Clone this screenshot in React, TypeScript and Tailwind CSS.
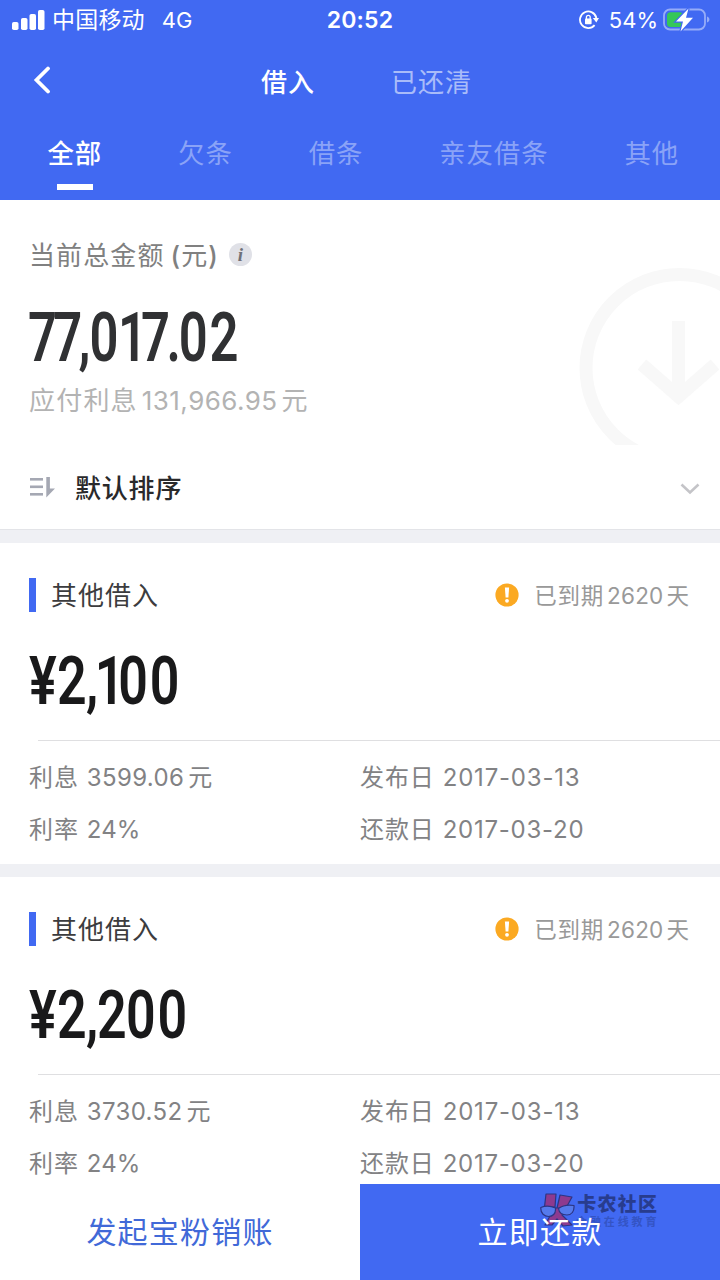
import clsx from "clsx";

const tabs = ["全部", "欠条", "借条", "亲友借条", "其他"];

const loans = [
  { title: "其他借入", overdue: "2620", amount: "¥2,100", interest: "3599.06", rate: "24%", issued: "2017-03-13", due: "2017-03-20" },
  { title: "其他借入", overdue: "2620", amount: "¥2,200", interest: "3730.52", rate: "24%", issued: "2017-03-13", due: "2017-03-20" },
];

// narrow DIN-like spacing for the big amounts
const glyphSpacing: Record<string, string> = {
  "¥": "tracking-[0.500px]",
  "0": "tracking-[2.500px]",
  "1": "-ml-[3px] tracking-[-8px]",
  "2": "tracking-[-1px]",
  "7": "tracking-[-5px]",
  ".": "tracking-[-3px]",
  ",": "tracking-[-1.500px]",
};

function Amount({ value, className }: { value: string; className: string }) {
  return (
    <div
      className={clsx(
        "h-[72px] w-fit origin-left font-[Roboto,sans-serif] leading-[72px] font-semibold whitespace-nowrap [font-kerning:none]",
        className,
      )}
    >
      {value.split("").map((char, i) => (
        <span key={i} className={glyphSpacing[char]}>
          {char}
        </span>
      ))}
    </div>
  );
}

function StatusBar() {
  return (
    <div className="grid h-10 grid-cols-[1fr_auto_1fr] items-center text-[22px] leading-10">
      <div className="flex items-center pl-3">
        <svg width="33" height="20" viewBox="0 0 33 20" fill="currentColor">
          <rect x="0" y="12" width="6.5" height="8" rx="1.8" />
          <rect x="9" y="8" width="6.5" height="12" rx="1.8" />
          <rect x="17.5" y="4" width="6.5" height="16" rx="1.8" />
          <rect x="26" y="0" width="6.5" height="20" rx="1.8" />
        </svg>
        <span className="ml-[7px] text-[23px] tracking-[0.2px]">中国移动</span>
        <span className="ml-[17px]">4G</span>
      </div>
      <div className="text-[23px] font-semibold tracking-[0.2px]">20:52</div>
      <div className="flex items-center justify-end pr-[10px]">
        <svg width="20" height="20" viewBox="0 0 20 20" fill="none" stroke="currentColor" strokeWidth="1.8">
          <path d="M15.6 15.200A8.300 8.300 0 1 1 17.400 8" />
          <path d="M13.800 8H20l-2.700 4.400z" fill="currentColor" stroke="none" />
          <rect x="6" y="8.600" width="6.600" height="5.600" rx="0.8" fill="currentColor" stroke="none" />
          <path d="M7.400 9V7.300a1.900 1.900 0 0 1 3.800 0V9" strokeWidth="1.300" />
        </svg>
        <span className="ml-[10px]">54%</span>
        <svg className="ml-[5px]" width="47" height="24" viewBox="0 0 47 24">
          <rect x="1" y="1.500" width="41" height="20" rx="6" fill="none" stroke="#fff" strokeOpacity="0.45" strokeWidth="1.8" />
          <path d="M44 8.500v6c1.600-.6 2.400-1.700 2.400-3s-.8-2.400-2.400-3z" fill="#fff" fillOpacity="0.45" />
          <rect x="4" y="4.300" width="16" height="14.600" rx="3.500" fill="#35c759" />
          <path d="M25.500.5 13 13.500h7L17.500 23.500 30 9.800h-7z" fill="#fff" stroke="#4169f2" strokeWidth="2.400" paintOrder="stroke" />
        </svg>
      </div>
    </div>
  );
}

function Header() {
  return (
    <header className="h-[200px] shrink-0 bg-[#4169f2] text-white">
      <StatusBar />
      <div className="flex h-[82px] items-center pl-[33px] text-[26px] leading-[38px] tracking-[1px]">
        <svg className="-mt-0.5" width="18" height="28" viewBox="0 0 18 28" fill="none" stroke="currentColor" strokeWidth="3.800">
          <path d="M15 2.500 3.500 14 15 25.500" strokeLinecap="round" />
        </svg>
        <span className="ml-[210px] pt-[3px] font-medium">借入</span>
        <span className="ml-[76px] pt-[3px] text-[#a9bcf9]">已还清</span>
      </div>
      <nav className="flex gap-[76px] pl-[47.500px] text-[26.400px] leading-[38px] tracking-[0.900px]">
        {tabs.map((tab, i) => (
          <div key={tab} className={clsx("flex shrink-0 flex-col items-center pt-[12px]", i === 0 ? "font-medium" : "text-[#8aa3f7]")}>
            {tab}
            {i === 0 && <span className="mt-[12px] h-1.5 w-9 bg-white" />}
          </div>
        ))}
      </nav>
    </header>
  );
}

function Summary() {
  return (
    <section className="relative h-[246px] shrink-0 overflow-hidden pl-[29px]">
      <svg className="absolute top-[68px] right-0" width="141" height="177" viewBox="0 0 141 177" fill="none" stroke="#f8f8f8" strokeWidth="13">
        <circle cx="100.500" cy="100" r="93.500" />
        <path d="M99.500 53v72M63 96.500l36.500 32 36.500-32" strokeLinejoin="miter" />
      </svg>
      <div className="flex items-center pt-[37px] text-[26px] leading-[38px] tracking-[1.100px] text-[#808080]">
        <span>当前总金额</span>
        <span className="ml-[6px] font-medium">(</span>
        <span>元</span>
        <span className="font-medium">)</span>
        <span className="-mt-[3px] ml-[10px] flex size-[23px] items-center justify-center rounded-full bg-[#e0e1e7] pb-px pl-px font-['Liberation_Serif',serif] text-[19px] leading-none font-bold text-[#6f7077] italic">
          i
        </span>
      </div>
      <Amount value="77,017.02" className="-ml-[1px] mt-[27px] scale-x-[0.735] text-[69px] text-[#303133]" />
      <div className="mt-[8px] flex text-[26px] leading-[38px] tracking-[1.200px] text-[#b3b3b3]">
        <span>应付利息</span>
        <span className="ml-[4px] tracking-[0.450px]">131,966.95</span>
        <span className="ml-[4px]">元</span>
      </div>
    </section>
  );
}

function SortBar() {
  return (
    <div className="flex h-[84px] shrink-0 items-center border-b border-[#e3e4e8] pr-5 pl-[29px]">
      <svg width="27" height="22" viewBox="0 0 27 22" fill="#a5a8b3">
        <rect x="1" y="1" width="13" height="2.600" />
        <rect x="1" y="8.500" width="13" height="2.600" />
        <rect x="1" y="16" width="13" height="2.600" />
        <path d="M17.300 0h3.600v11.500H26L17.300 20.500z" />
      </svg>
      <span className="ml-[19px] pt-[2px] text-[26px] leading-[38px] font-medium tracking-[0.800px] text-[#29292b]">默认排序</span>
      <svg className="mt-[2px] ml-auto" width="20" height="14" viewBox="0 0 20 14" fill="none" stroke="#c4c4c8" strokeWidth="2.600">
        <path d="m1.500 2.500 8.500 8 8.500-8" />
      </svg>
    </div>
  );
}

function LoanCard({ loan }: { loan: (typeof loans)[number] }) {
  return (
    <section className="h-[334px] border-t-[13px] border-[#eff0f4]">
      <div className="flex items-center pt-[34px] pr-[31px] pl-[29px] leading-[34px]">
        <span className="h-[34px] w-[7px] bg-[#4169f2]" />
        <span className="ml-[15px] pt-[2px] text-[26px] tracking-[1px] text-[#3c3c3e]">{loan.title}</span>
        <svg className="ml-auto" width="24" height="24" viewBox="0 0 24 24">
          <circle cx="12" cy="12" r="11.600" fill="#fba922" />
          <path d="M9.900 4.500h4.200l-.7 10h-2.800z" fill="#fff" />
          <circle cx="12" cy="17.800" r="1.900" fill="#fff" />
        </svg>
        <span className="ml-[15px] flex pt-[2px] text-[22.500px] tracking-[0.800px] text-[#999]">
          已到期<span className="ml-[3px] tracking-[0.200px]">{loan.overdue}</span>
          <span className="ml-[3px] tracking-normal">天</span>
        </span>
      </div>
      <Amount value={loan.amount} className="mt-[32px] ml-[29px] scale-x-[0.775] text-[67px] text-[#19191a]" />
      <div className="mt-[23px] ml-[38px] h-px bg-[#dfdfe1]" />
      <div className="grid grid-cols-[331px_1fr] gap-y-[14px] pt-[18px] pl-[29px] text-[24px] leading-[38px] tracking-[0.900px] text-[#828284]">
        <div className="flex gap-[8px]">
          利息<span className="tracking-[0.350px]">{loan.interest}</span>
          <span className="-ml-[4px]">元</span>
        </div>
        <div className="flex gap-[8px]">
          发布日<span className="tracking-[0.800px]">{loan.issued}</span>
        </div>
        <div className="flex gap-[8px]">
          利率<span className="tracking-[0.100px]">{loan.rate}</span>
        </div>
        <div className="flex gap-[8px]">
          还款日<span className="tracking-[0.750px]">{loan.due}</span>
        </div>
      </div>
    </section>
  );
}

function Watermark() {
  return (
    <div className="absolute top-[8px] left-[180px] flex text-[#283c8e]">
      <svg width="35" height="36" viewBox="0 0 35 36" stroke="#2c3584" strokeWidth="1.200" strokeLinejoin="round">
        <path d="M6 2h10l-1 13H4.500zM20 3l12 2-6 11h-9zM9 16h16l-3 7 10 10-9 1-6-7-5 6H5l5-9z" fill="#8d3a8f" />
        <path d="M.8 15.500c5-2 10-1.500 14.700.5.500 6-3 8.500-7 8.500s-8-3-7.700-9zM18.500 16.500c4-3 10-4 15.500-3 .5 6-2.500 9.500-7 9.500-5 0-8-2.500-8.500-6.500z" fill="#557aec" />
      </svg>
      <div className="pl-px">
        <div className="text-[19px] leading-[25px] font-black tracking-[1.200px]">卡农社区</div>
        <div className="text-[11px] leading-[10px] font-bold tracking-[2.900px] whitespace-nowrap text-[#3454c4]">金融在线教育</div>
      </div>
    </div>
  );
}

function BottomBar() {
  return (
    <footer className="grid h-24 shrink-0 grid-cols-2 bg-white text-[30px] leading-[97px] tracking-[1.200px]">
      <button className="text-[#4169d8]">发起宝粉销账</button>
      <button className="relative bg-[#4169f2] text-white">
        <Watermark />
        <span className="relative">立即还款</span>
      </button>
    </footer>
  );
}

export default function App() {
  return (
    <main className="flex h-[1280px] w-[720px] flex-col overflow-hidden bg-white font-[Inter,'Noto_Sans_CJK_SC',sans-serif]">
      <Header />
      <Summary />
      <SortBar />
      <div className="h-[654px] shrink-0 overflow-hidden">
        {loans.map((loan) => (
          <LoanCard key={loan.amount} loan={loan} />
        ))}
      </div>
      <BottomBar />
    </main>
  );
}
